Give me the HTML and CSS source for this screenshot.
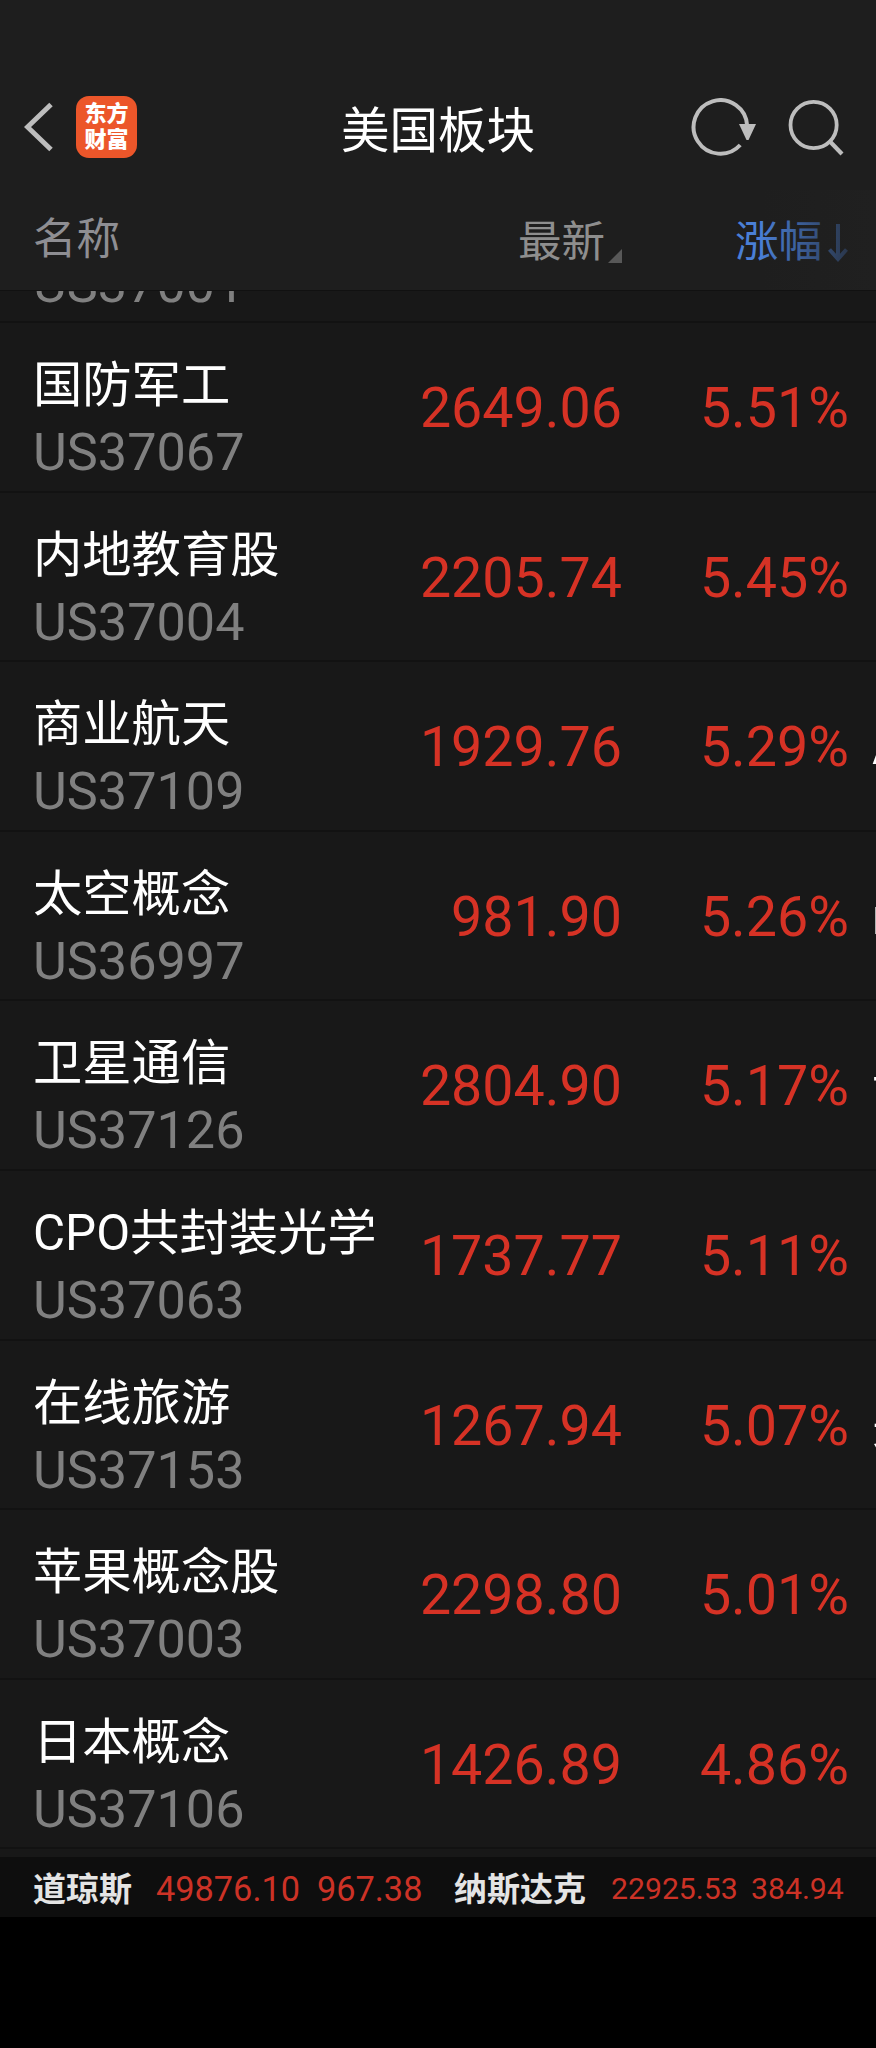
FILE: index.html
```
<!DOCTYPE html>

<html lang="zh-CN">

  <head>

    <meta charset="utf-8">

    <title>美国板块</title>

    <link rel="stylesheet" href="styles.css">

  </head>

  <body>

    <!--TOP BAR-->

    <header class="topBar">

      <div class="topLeft">
        <svg class="backIcon" width="30" height="52" viewBox="0 0 30 52">
          <path d="M27 3.5 L3.5 26 L27 48.5" fill="none" stroke="#bdbdbd" stroke-width="5" />
        </svg>

        <div class="logo">
          <span>东方</span>
          <span>财富</span>
        </div>
      </div>

      <h1 class="title">美国板块</h1>

      <div class="topRight">
        <svg width="66" height="58" viewBox="0 0 66 58">
          <path d="M56.2 28 A26.8 26.8 0 1 0 49.2 47" fill="none" stroke="#bdbdbd" stroke-width="4" />
          <path d="M48 26 H65 L57.5 42 H55.5 Z" fill="#bdbdbd" />
        </svg>

        <svg width="56" height="58" viewBox="0 0 56 58">
          <circle cx="25.6" cy="27" r="23.1" fill="none" stroke="#bdbdbd" stroke-width="3.8" />
          <path d="M41 42.5 L54 56" fill="none" stroke="#bdbdbd" stroke-width="4.2" />
        </svg>
      </div>

    </header>


    <!--COLUMN NAMES-->

    <div class="columns">
      <span class="colName">名称</span>

      <span class="colPrice">最新<i class="corner"></i></span>

      <span class="colChange">涨幅
        <svg width="20" height="40" viewBox="0 0 20 40">
          <path d="M10 1 V36 M1.5 26.5 L10 36 L18.5 26.5" fill="none" stroke="#4a7fd6" stroke-width="4" />
        </svg>
      </span>

      <div class="fade"></div>
    </div>


    <!--LIST-->

    <main class="list">

      <div class="row cutRow">
        <div class="stock"><span class="code">US37001</span></div>
      </div>

      <div class="row">
        <div class="stock"><span class="name">国防军工</span><span class="code">US37067</span></div>
        <span class="price">2649.06</span>
        <span class="change">5.51%</span>
      </div>

      <div class="row">
        <div class="stock"><span class="name">内地教育股</span><span class="code">US37004</span></div>
        <span class="price">2205.74</span>
        <span class="change">5.45%</span>
      </div>

      <div class="row">
        <div class="stock"><span class="name">商业航天</span><span class="code">US37109</span></div>
        <span class="price">1929.76</span>
        <span class="change">5.29%</span>
        <span class="leader">A</span>
      </div>

      <div class="row">
        <div class="stock"><span class="name">太空概念</span><span class="code">US36997</span></div>
        <span class="price">981.90</span>
        <span class="change">5.26%</span>
        <span class="leader">n</span>
      </div>

      <div class="row">
        <div class="stock"><span class="name">卫星通信</span><span class="code">US37126</span></div>
        <span class="price">2804.90</span>
        <span class="change">5.17%</span>
        <span class="leader">诺</span>
      </div>

      <div class="row">
        <div class="stock"><span class="name">CPO共封装光学</span><span class="code">US37063</span></div>
        <span class="price">1737.77</span>
        <span class="change">5.11%</span>
      </div>

      <div class="row">
        <div class="stock"><span class="name">在线旅游</span><span class="code">US37153</span></div>
        <span class="price">1267.94</span>
        <span class="change">5.07%</span>
        <span class="leader">美</span>
      </div>

      <div class="row">
        <div class="stock"><span class="name">苹果概念股</span><span class="code">US37003</span></div>
        <span class="price">2298.80</span>
        <span class="change">5.01%</span>
      </div>

      <div class="row">
        <div class="stock"><span class="name">日本概念</span><span class="code">US37106</span></div>
        <span class="price">1426.89</span>
        <span class="change">4.86%</span>
      </div>

    </main>


    <!--INDEX BAR-->

    <footer class="indexBar">
      <span class="indexName">道琼斯</span>
      <span class="dow">49876.10</span>
      <span class="dow dowChange">967.38</span>
      <span class="indexName nasdaqName">纳斯达克</span>
      <span class="nasdaq">22925.53</span>
      <span class="nasdaq nasdaqChange">384.94</span>
    </footer>

  </body>

</html>
```
FILE: styles.css
```
*{
  box-sizing: border-box;
}

body{
  margin: 0;
  width: 876px;
  height: 2048px;
  overflow: hidden;
  display: flex;
  flex-direction: column;
  background-color: black;
  font-family: Roboto, "Noto Sans CJK SC", sans-serif;
  white-space: nowrap;
}

.topBar{
  height: 190px;
  padding: 94px 32px 0 24px;
  display: grid;
  grid-template-columns: 1fr auto 1fr;
  align-items: start;
  background-color: rgb(30, 30, 30);
}

.topLeft{
  height: 66px;
  display: flex;
  align-items: center;
  gap: 22px;
}

.logo{
  width: 61px;
  height: 62px;
  padding-top: 5px;
  border-radius: 13px;
  display: flex;
  flex-direction: column;
  align-items: center;
  background-color: rgb(236, 86, 42);
  color: white;
  font-size: 22px;
  font-weight: 900;
  line-height: 26px;
}

.title{
  margin: 5px 0 0 8px;
  color: white;
  font-size: 48.5px;
  font-weight: 400;
  line-height: 66px;
}

.topRight{
  margin-top: 4px;
  display: flex;
  justify-content: flex-end;
  gap: 31px;
}

.columns{
  position: relative;
  height: 100px;
  padding-left: 33px;
  display: flex;
  background-color: rgb(30, 30, 30);
  color: rgb(142, 142, 147);
  font-size: 43.5px;
  line-height: 64px;
}

.colName{
  width: 485px;
  padding-top: 18px;
}

.colPrice{
  width: 217px;
  padding-top: 21px;
  display: flex;
  color: rgb(142, 142, 142);
}

.corner{
  width: 14px;
  height: 14px;
  margin: 38px 0 0 3px;
  background-color: rgb(88, 88, 88);
  clip-path: polygon(100% 0, 100% 100%, 0 100%);
}

.colChange{
  padding-top: 21px;
  display: flex;
  gap: 6px;
  color: rgb(74, 127, 214);
}

.colChange svg{
  margin-top: 12px;
}

.fade{
  position: absolute;
  top: 0;
  right: 0;
  width: 116px;
  height: 100px;
  background: linear-gradient(to right, rgba(32, 32, 32, 0), rgb(32, 32, 32));
}

.list{
  height: 1567px;
  overflow: hidden;
  background-color: rgb(24, 24, 24);
  border-top: 1px solid rgb(17, 17, 17);
}

.row{
  height: 169.6px;
  padding-left: 33px;
  display: flex;
  border-bottom: 2px solid rgb(18, 18, 18);
}

.row > *{
  flex-shrink: 0;
}

.cutRow{
  height: 32px;
  align-items: flex-end;
}

.stock{
  width: 367px;
  padding-top: 28px;
  display: flex;
  flex-direction: column;
}

.cutRow .stock{
  padding: 0 0 3px;
}

.name{
  height: 69px;
  color: white;
  font-size: 49.3px;
  line-height: 68px;
}

.code{
  height: 66px;
  color: rgb(128, 128, 128);
  font-size: 52.2px;
  line-height: 66px;
}

.price, .change{
  padding-top: 52px;
  color: rgb(214, 50, 37);
  font-size: 55.6px;
  line-height: 66px;
  text-align: right;
}

.price{
  width: 222px;
}

.change{
  width: 227px;
}

.leader{
  padding: 52px 0 0 23px;
  color: white;
  font-size: 49.3px;
  line-height: 66px;
}

.indexBar{
  height: 60px;
  padding-left: 33px;
  display: flex;
  background-color: rgb(14, 14, 14);
  color: rgb(204, 50, 38);
  line-height: 64px;
}

.indexBar span{
  flex-shrink: 0;
}

.indexName{
  width: 123px;
  padding-top: 1px;
  color: rgb(228, 228, 228);
  font-size: 33px;
  font-weight: 700;
}

.dow{
  width: 161px;
  font-size: 34.3px;
}

.dowChange{
  width: 137px;
}

.nasdaqName{
  width: 157px;
}

.nasdaq{
  width: 140px;
  font-size: 30.2px;
}

.nasdaqChange{
  width: 100px;
}
```
